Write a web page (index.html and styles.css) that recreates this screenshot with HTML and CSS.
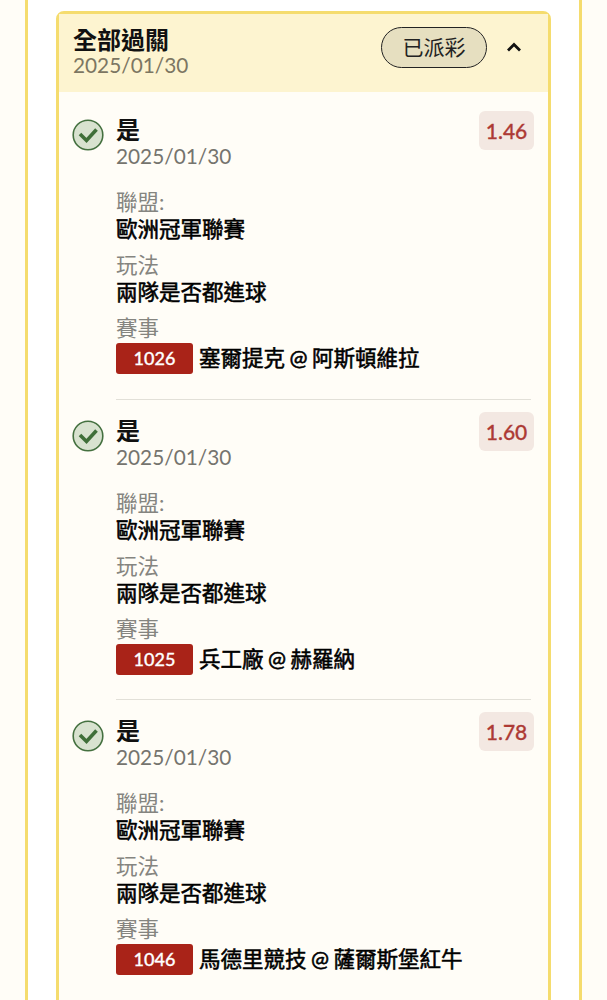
FILE: index.html
```html
<!DOCTYPE html>
<html lang="zh-Hant">
<head>
    <meta charset="UTF-8">
    <meta name="viewport" content="width=device-width, initial-scale=1.0">
    <title>全部過關</title>
    <link rel="stylesheet" href="styles.css">
</head>
<body>
    <div class="panel">
        <div class="card">
            <div class="card-head">
                <div class="head-text">
                    <div class="head-title">全部過關</div>
                    <div class="head-date">2025/01/30</div>
                </div>
                <div class="status">已派彩</div>
                <svg class="chevron" width="16" height="10" viewBox="0 0 16 10">
                    <path d="M2 8.5 L8 2.5 L14 8.5" fill="none" stroke="#111" stroke-width="2.8"/>
                </svg>
            </div>

            <div class="legs">
                <div class="leg">
                    <svg class="check" width="32" height="32" viewBox="0 0 32 32">
                        <circle cx="16" cy="16" r="14.8" fill="#d8e2cf" stroke="#44703f" stroke-width="1.6"/>
                        <path d="M8 15 L14.5 21.5 L24.5 10.5" fill="none" stroke="#3f6f38" stroke-width="3.6"/>
                    </svg>
                    <div class="leg-body">
                        <div class="leg-top">
                            <div>
                                <div class="leg-title">是</div>
                                <div class="leg-date">2025/01/30</div>
                            </div>
                            <div class="odds">1.46</div>
                        </div>
                        <div class="label first">聯盟:</div>
                        <div class="value">歐洲冠軍聯賽</div>
                        <div class="label">玩法</div>
                        <div class="value">兩隊是否都進球</div>
                        <div class="label">賽事</div>
                        <div class="match">
                            <span class="match-no">1026</span>
                            <span class="value">塞爾提克 @ 阿斯頓維拉</span>
                        </div>
                    </div>
                </div>

                <div class="leg">
                    <svg class="check" width="32" height="32" viewBox="0 0 32 32">
                        <circle cx="16" cy="16" r="14.8" fill="#d8e2cf" stroke="#44703f" stroke-width="1.6"/>
                        <path d="M8 15 L14.5 21.5 L24.5 10.5" fill="none" stroke="#3f6f38" stroke-width="3.6"/>
                    </svg>
                    <div class="leg-body">
                        <div class="leg-top">
                            <div>
                                <div class="leg-title">是</div>
                                <div class="leg-date">2025/01/30</div>
                            </div>
                            <div class="odds">1.60</div>
                        </div>
                        <div class="label first">聯盟:</div>
                        <div class="value">歐洲冠軍聯賽</div>
                        <div class="label">玩法</div>
                        <div class="value">兩隊是否都進球</div>
                        <div class="label">賽事</div>
                        <div class="match">
                            <span class="match-no">1025</span>
                            <span class="value">兵工廠 @ 赫羅納</span>
                        </div>
                    </div>
                </div>

                <div class="leg">
                    <svg class="check" width="32" height="32" viewBox="0 0 32 32">
                        <circle cx="16" cy="16" r="14.8" fill="#d8e2cf" stroke="#44703f" stroke-width="1.6"/>
                        <path d="M8 15 L14.5 21.5 L24.5 10.5" fill="none" stroke="#3f6f38" stroke-width="3.6"/>
                    </svg>
                    <div class="leg-body">
                        <div class="leg-top">
                            <div>
                                <div class="leg-title">是</div>
                                <div class="leg-date">2025/01/30</div>
                            </div>
                            <div class="odds">1.78</div>
                        </div>
                        <div class="label first">聯盟:</div>
                        <div class="value">歐洲冠軍聯賽</div>
                        <div class="label">玩法</div>
                        <div class="value">兩隊是否都進球</div>
                        <div class="label">賽事</div>
                        <div class="match">
                            <span class="match-no">1046</span>
                            <span class="value">馬德里競技 @ 薩爾斯堡紅牛</span>
                        </div>
                    </div>
                </div>
            </div>
        </div>
    </div>
</body>
</html>
```

FILE: styles.css
```css
html, body {
    height: 100%;
    overflow: hidden;
}

body {
    margin: 0;
    background-color: #fffdf7;
    font-family: Lato, "Noto Sans CJK TC", sans-serif;
    color: #111;
}

/* the panel and card run on past the bottom of the frame */
.panel {
    box-sizing: border-box;
    height: 1000px;
    margin: 0 25px;
    padding: 11px 28px 0;
    background-color: #fff;
    border-left: 3px solid #f5dc6e;
    border-right: 3px solid #f5dc6e;
}

.card {
    box-sizing: border-box;
    height: 1100px;
    background-color: #fffdf7;
    border: 3px solid #f5dc6e;
    border-radius: 8px;
}

.card-head {
    display: flex;
    align-items: flex-start;
    box-sizing: border-box;
    height: 78px;
    padding: 13px 26px 0 14px;
    background-color: #fdf4d0;
}

.head-text {
    flex: 1;
    margin-top: -1px;
}

.head-title {
    font-size: 24px;
    font-weight: 700;
    line-height: 27px;
}

.head-date {
    font-size: 20.8px;
    line-height: 24px;
    color: #7c7662;
}

.status {
    box-sizing: border-box;
    width: 106px;
    height: 41px;
    margin-right: 19px;
    border: 1.5px solid #222;
    border-radius: 21px;
    background-color: #e6dfc0;
    font-size: 21px;
    line-height: 38px;
    text-align: center;
    color: #222;
}

.chevron {
    flex: none;
    margin-top: 15px;
}

.legs {
    padding-top: 7px;
}

.leg {
    display: flex;
    align-items: flex-start;
    margin-left: 13px;
    padding-top: 12px;
}

.check {
    flex: none;
    margin-top: 8px;
    margin-right: 12px;
}

.leg-body {
    flex: 1;
    box-sizing: border-box;
    height: 288.5px;
    margin-right: 17px;
    border-bottom: 1px solid #e2e0d8;
}

.leg-top {
    display: flex;
    justify-content: space-between;
    margin-right: -3px;
}

.leg-title {
    margin-top: 5px;
    padding-bottom: 1px;
    font-size: 24px;
    font-weight: 700;
    line-height: 27px;
}

.leg-date {
    font-size: 20.8px;
    line-height: 24px;
    color: #75746e;
}

.odds {
    box-sizing: border-box;
    width: 55px;
    height: 39px;
    border-radius: 6px;
    background-color: #f3e8e2;
    color: #ad3a35;
    font-size: 21px;
    font-weight: 500;
    -webkit-text-stroke: 0.3px #ad3a35;
    line-height: 39px;
    text-align: center;
}

.label {
    margin-top: 9px;
    font-size: 21.5px;
    line-height: 27px;
    color: #858580;
}

.label.first {
    margin-top: 21px;
}

/* no medium CJK cut here, so thicken the regular one a little */
.value {
    font-size: 21.5px;
    font-weight: 400;
    color: #000;
    -webkit-text-stroke: 0.55px #000;
    word-spacing: -1px;
    line-height: 27px;
}

.match {
    display: flex;
    align-items: center;
    gap: 6px;
    margin-top: 1px;
}

.match-no {
    box-sizing: border-box;
    width: 77px;
    height: 31px;
    border-radius: 3px;
    background-color: #a92318;
    color: #fff;
    font-size: 18px;
    font-weight: 500;
    -webkit-text-stroke: 0.3px #fff;
    line-height: 31px;
    text-align: center;
}
```
